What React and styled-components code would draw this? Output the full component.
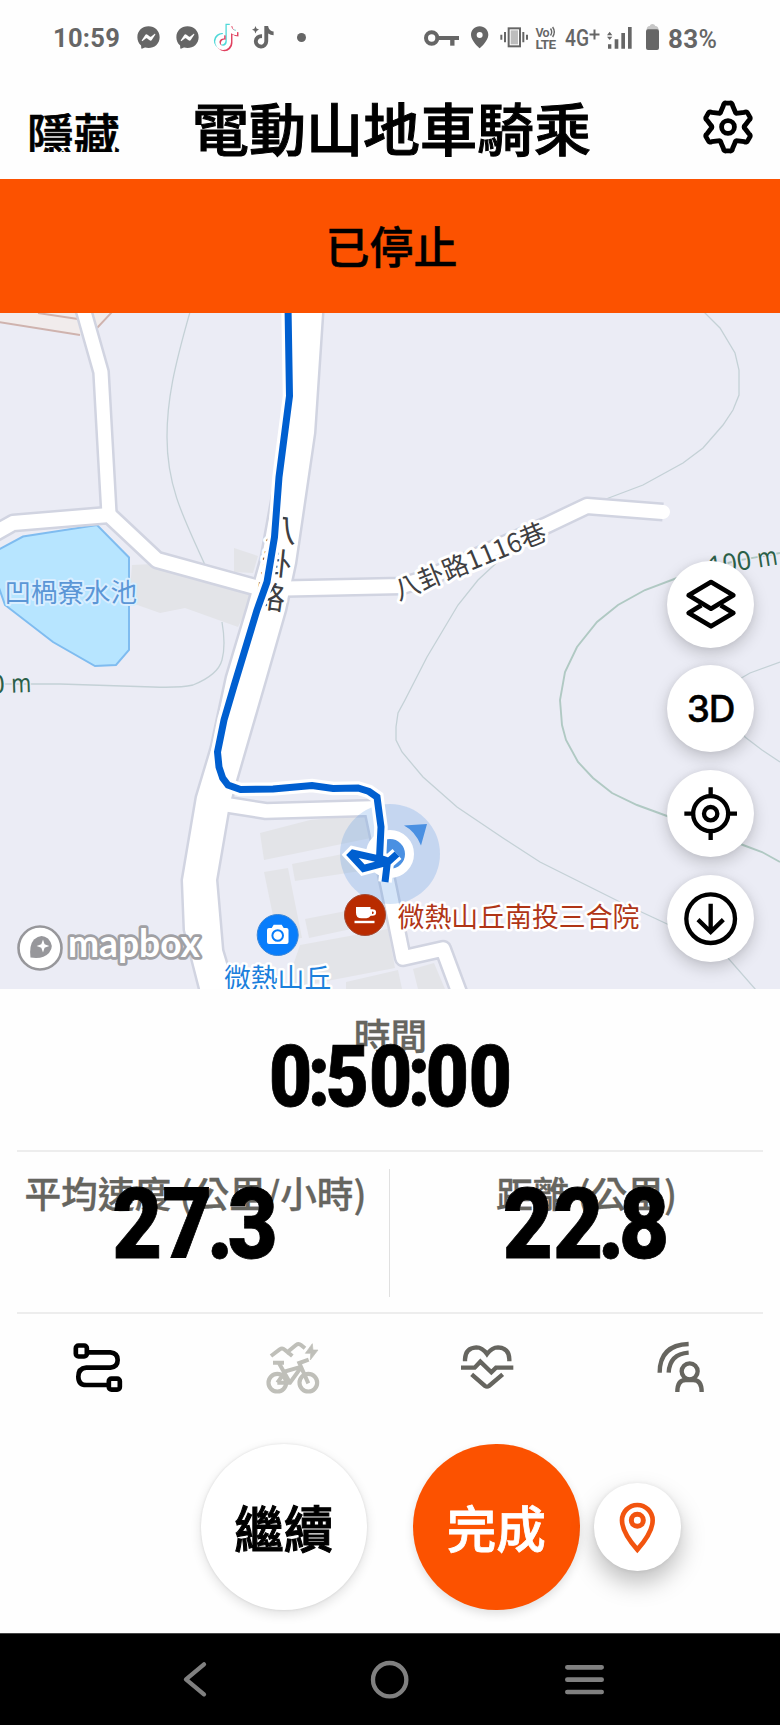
import React from "react";
import styled, { createGlobalStyle } from "styled-components";
import { FaFacebookMessenger, FaTiktok } from "react-icons/fa";

const ORANGE = "#fc5200";
const CJK = '"Noto Sans CJK TC", "Noto Sans CJK SC", sans-serif';

const GlobalStyle = createGlobalStyle`
  * { box-sizing: border-box; }
  body { margin: 0; background: #fefefe; }
`;

const Screen = styled.div`
  width: 780px;
  height: 1725px;
  display: flex;
  flex-direction: column;
  overflow: hidden;
  background: #fefefe;
  color: #000;
  font-family: Roboto, ${CJK};
`;

const StatusBar = styled.div`
  height: 75px;
  padding: 0 62px 0 53px;
  display: flex;
  align-items: center;
  justify-content: space-between;
  color: #666;
  line-height: 1;
`;

const StatusGroup = styled.div`
  display: flex;
  align-items: center;
  height: 30px;
`;

const StatusText = styled.span`
  font-family: Roboto, sans-serif;
  font-size: ${(p) => p.$size || 25.5}px;
  font-weight: ${(p) => p.$weight || 700};
  letter-spacing: ${(p) => p.$spacing || 0}px;
  margin-left: ${(p) => p.$gap || 0}px;
  padding-top: 2px;
  width: ${(p) => p.$width}px;
  white-space: nowrap;
`;

const StatusIcon = styled.span`
  display: flex;
  margin-left: ${(p) => p.$gap || 0}px;
  svg { display: block; overflow: visible; }
`;

const Dot = styled.span`
  width: 9px;
  height: 9px;
  border-radius: 50%;
  background: #666;
  margin-left: 23px;
`;

const Header = styled.header`
  height: 104px;
  padding: 0 26px 0 27px;
  display: grid;
  grid-template-columns: 120px 1fr 52px;
  align-items: center;
`;

const HideButton = styled.button`
  border: 0;
  padding: 0;
  background: none;
  color: #000;
  text-align: left;
  height: 49px;
  margin-top: 1px;
  overflow: hidden;
  font: 500 46.5px/60px ${CJK};
  -webkit-text-stroke: 0.7px currentColor;
  white-space: nowrap;
`;

const Title = styled.h1`
  margin: 0 0 2px -66px;
  text-align: center;
  font: 500 57px/80px ${CJK};
  -webkit-text-stroke: 1px currentColor;
  white-space: nowrap;
`;

const IconButton = styled.button`
  border: 0;
  padding: 0;
  background: none;
  display: flex;
  justify-content: center;
  color: #000;
  svg { display: block; overflow: visible; }
`;

const Banner = styled.div`
  height: 134px;
  background: ${ORANGE};
  display: flex;
  align-items: center;
  justify-content: center;
  padding: 0 0 0 3px;
  font: 500 44px/1.4 ${CJK};
  -webkit-text-stroke: 0.5px currentColor;
`;

const MapPanel = styled.section`
  position: relative;
  height: 676px;
  overflow: hidden;
  background: #ebecf5;
`;

const MapSvg = styled.svg`
  display: block;
`;

const MapControls = styled.div`
  position: absolute;
  right: 26px;
  top: 247.5px;
  display: flex;
  flex-direction: column;
  gap: 17.8px;
`;

const RoundButton = styled.button`
  width: ${(p) => p.$size}px;
  height: ${(p) => p.$size}px;
  flex: none;
  border: 0;
  padding: 0;
  border-radius: 50%;
  display: flex;
  align-items: center;
  justify-content: center;
  background: ${(p) => p.$bg || "#fff"};
  color: ${(p) => p.$fg || "#000"};
  box-shadow: ${(p) => p.$shadow || "0 6px 16px rgba(0,0,0,.18), 0 0 6px rgba(0,0,0,.06)"};
  font: ${(p) => p.$font || "500 49.5px/1.4 " + CJK};
  letter-spacing: ${(p) => p.$spacing || 0}px;
  margin: ${(p) => p.$margin || 0};
  -webkit-text-stroke: ${(p) => p.$stroke || 0}px currentColor;
  svg { display: block; overflow: visible; }
`;

const Stats = styled.section`
  margin: 0 17px;
  display: flex;
  flex-direction: column;
`;

const StatRow = styled.div`
  display: grid;
  grid-template-columns: ${(p) => (p.$split ? "372px 1fr" : "1fr")};
  height: ${(p) => p.$height}px;
  padding: ${(p) => (p.$split ? "17px 0 15px" : "0")};
  border-bottom: 2px solid #ededed;
`;

const Stat = styled.div`
  display: flex;
  flex-direction: column;
  align-items: center;
  border-left: ${(p) => (p.$divided ? "1px solid #e0e0e0" : "0")};
  padding: 0 ${(p) => p.$right || 0}px 0 ${(p) => p.$left || 0}px;
  min-width: 0;
`;

const StatLabel = styled.div`
  color: #66655f;
  font: 500 36.7px/54px ${CJK};
  -webkit-text-stroke: 0.3px currentColor;
  height: ${(p) => p.$height}px;
  margin-top: ${(p) => p.$top}px;
  white-space: nowrap;
`;

const StatValue = styled.div`
  z-index: 1;
  font: 900 ${(p) => p.$size}px/${(p) => p.$size}px Roboto, sans-serif;
  transform: scaleX(${(p) => p.$scale});
  -webkit-text-stroke: 0.8px currentColor;
  white-space: nowrap;
`;

const Separator = styled.span`
  margin: 0 ${(p) => p.$trim}px;
`;

const Tabs = styled.nav`
  height: 110px;
  padding-bottom: 2px;
  display: grid;
  grid-template-columns: repeat(4, 1fr);
  align-items: center;
`;

const Actions = styled.div`
  flex: 1;
  display: flex;
  align-items: flex-start;
  padding: 19.5px 0 0 200.5px;
`;

const NavBar = styled.footer`
  height: 92px;
  padding: 0 97.5px;
  display: grid;
  grid-template-columns: repeat(3, 1fr);
  align-items: center;
  background: #000;
  border-top: 1px solid #444;
`;

/* Draws a glyph from a viewBox whose units are a third of a pixel. */
const Glyph = ({ box, children, ...rest }) => {
  const [, , w, h] = box.split(" ").map(Number);
  return (
    <svg viewBox={box} width={w / 3} height={h / 3} fill="none" stroke="currentColor" {...rest}>
      {children}
    </svg>
  );
};

const gearPath = (() => {
  const pt = (r, deg) => {
    const a = ((deg - 90) * Math.PI) / 180;
    return `${(r * Math.cos(a)).toFixed(2)} ${(r * Math.sin(a)).toFixed(2)}`;
  };
  let d = "";
  for (let i = 0; i < 6; i++) {
    const t = i * 60;
    d += `${i ? "L" : "M"}${pt(22, t - 12)} Q${pt(24.8, t - 10)} ${pt(24, t - 4.5)} L${pt(24, t + 4.5)} Q${pt(24.8, t + 10)} ${pt(22, t + 12)} L${pt(17.2, t + 24)} Q${pt(15, t + 30)} ${pt(17.2, t + 36)}`;
  }
  return d + "Z";
})();

function Status() {
  return (
    <StatusBar>
      <StatusGroup>
        <StatusText $width={66} $spacing={0.3}>10:59</StatusText>
        <StatusIcon $gap={18}><FaFacebookMessenger size={23} /></StatusIcon>
        <StatusIcon $gap={16}><FaFacebookMessenger size={23} /></StatusIcon>
        <StatusIcon $gap={14}>
          <svg width="25" height="27" viewBox="0 0 25 27">
            <g color="#4fd8d8"><FaTiktok x="-0.7" y="-0.2" size={25} /></g>
            <g color="#e0405f"><FaTiktok x="2" y="2.2" size={25} /></g>
            <g color="#fefefe"><FaTiktok x="0.6" y="1" size={25} /></g>
          </svg>
        </StatusIcon>
        <StatusIcon $gap={14}>
          <svg width="22" height="23" viewBox="0 0 22 23">
            <FaTiktok x="0.5" y="0" size={22.5} />
            <path d="M3.5 0l1 2.5L7 3.6 4.6 5 3.4 7.4 2.4 4.8 0 3.8l2.5-1.3z" fill="#666" />
          </svg>
        </StatusIcon>
        <Dot />
      </StatusGroup>
      <StatusGroup>
        <StatusIcon>
          <Glyph box="102 85 105 54">
            <circle cx="125" cy="112" r="17" strokeWidth="12" />
            <path d="M142 112H207" strokeWidth="12" />
            <path d="M187 112V135" strokeWidth="13" />
          </Glyph>
        </StatusIcon>
        <StatusIcon $gap={12}>
          <Glyph box="245 79 53 68">
            <path fill="currentColor" stroke="none" fillRule="evenodd" d="M271 80c-15 0-26 11-26 26 0 18 26 40 26 40s26-22 26-40c0-15-11-26-26-26zm0 17a9 9 0 1 1 0 18 9 9 0 0 1 0-18z" />
          </Glyph>
        </StatusIcon>
        <StatusIcon $gap={11}>
          <Glyph box="332 82 86 62">
            <rect x="358" y="86" width="34" height="54" strokeWidth="6" />
            <rect x="364" y="92" width="22" height="42" fill="#bdbdbd" stroke="none" />
            <path d="M347 97V128M336 105V120M402 97V128M413 105V120" strokeWidth="6" />
          </Glyph>
        </StatusIcon>
        <StatusIcon $gap={7}>
          <svg width="22" height="24" viewBox="0 0 22 24" fill="#666">
            <text x="0.5" y="10.5" fontFamily="Roboto, sans-serif" fontWeight="600" fontSize="12.5" textLength="14">Vo</text>
            <path d="M15.5 2.5q2.4 3.5 0 7M17.6 1q3.4 4.8 0 10" fill="none" stroke="#666" strokeWidth="1.4" />
            <text x="0.5" y="23" fontFamily="Roboto, sans-serif" fontWeight="700" fontSize="13.5" textLength="20.5">LTE</text>
          </svg>
        </StatusIcon>
        <StatusIcon $gap={8}>
          <svg width="35" height="24" viewBox="0 0 35 24" fill="#666">
            <text x="0" y="20" fontFamily="Roboto, sans-serif" fontWeight="500" fontSize="24" textLength="24" lengthAdjust="spacingAndGlyphs">4G</text>
            <path d="M24.5 8.5H34.5M29.5 3.5V13.5" stroke="#666" strokeWidth="2" />
          </svg>
        </StatusIcon>
        <StatusIcon $gap={7}>
          <Glyph box="655 78 76 66">
            <path fill="currentColor" stroke="none" d="M658 130h10v13h-10zM678 115h11v28h-11zM698 96h11v47h-11zM718 78h11v65h-11zM655 103l8-11 8 11zM655 107h16l-8 10z" />
          </Glyph>
        </StatusIcon>
        <StatusIcon $gap={13}>
          <Glyph box="771 72 40 79">
            <path fill="#c6c6c6" stroke="none" d="M773 90q0-12 9-12 2-6 8-6 7 0 9 6 9 0 10 12z" />
            <rect x="771" y="88" width="39" height="62" rx="6" fill="currentColor" stroke="none" />
          </Glyph>
        </StatusIcon>
        <StatusText $gap={9} $width={50} $size={26} $spacing={0.3}>83<StatusText $weight={500} $size={25}>%</StatusText></StatusText>
      </StatusGroup>
    </StatusBar>
  );
}

const roads = [
  { d: "M79 300L84 312L101 372L109 514", w: 13 },
  { d: "M-12 537L13 523L109 515L157 560L262 589", w: 14 },
  { d: "M262 589L402 586L430 577L545 526L587 506L663 512", w: 14 },
  { d: "M222 804L266 811L372 808L389 889L403 958L443 949L462 1000", w: 13.5 },
];

const mainRoad =
  "M289 300L288 396L276 480L262 557L248 607L227 677L212 747L197 797L183 880L185 930L203 1000H237L222 950L216 880L228 810L236 780L265 680L285 610L295 563L314 433L322 313V300Z";

const contours = [
  "M190 312C174 368 167 400 167 437C167 485 182 515 206 567",
  "M222 622Q226 645 222 660T193 685Q180 688 153 687L60 684L-4 684",
  "M704 312L720 328L735 353L739 370V395L733 410L723 425L703 448L683 463L643 485L606 499",
  "M505 555L478 580L458 605L427 657L405 700L398 713L396 727V740L402 752L423 777L457 807L503 838L540 862L620 902L680 930L728 958L756 990",
  "M780 662L750 673L738 680L730 700L745 737L762 750L780 762",
];

const route =
  "M288 306L289.5 396L279 477L274.5 537L267 582L257 610L234 686L224 720L217.5 752L219 767L222.7 778L228 785L240.5 789.5L273 789L312 785.5L333 788.5L358 788L369 791.5L377 797L381 827L379.5 858L388 861L353 853L351 855L363.5 868.5L388 862L397 854M387.5 861L385 882";

const haloStyle = { paintOrder: "stroke", strokeLinejoin: "round" };

const ContourLabel = ({ transform }) => (
  <g transform={transform} fill="#2b6048" stroke="#ebecf5" strokeWidth="3" fontSize="26" fontFamily='"Noto Sans", sans-serif' style={haloStyle}>
    <text x="-69" textLength="43" lengthAdjust="spacingAndGlyphs">100</text>
    <text x="-19.500" textLength="20" lengthAdjust="spacingAndGlyphs">m</text>
  </g>
);

function MapView() {
  return (
    <MapSvg width="780" height="676" viewBox="0 313 780 676" fontFamily={CJK} fill="none">
      <path d="M-4 308H112L97 328L80 335L-4 322Z" fill="#f1ecec" />
      <path d="M-2 322L80 335M38 313L78 319M112 312L97 328" stroke="#cfb3ae" strokeWidth="1.9" />
      <g fill="#e3e4e8">
        <path d="M132 565L153 564L160 570L254 594L238 627L185 608L160 613L129 602Z" />
        <path d="M234 548L258 556L253 573L234 572Z" />
        <path d="M260 833L310 820L366 815L371 838L264 860Z" />
        <path d="M292 864L353 852L378 852L380 868L295 881Z" />
        <path d="M264 872L288 868L302 938L278 940Z" />
        <path d="M305 919L346 911L380 906L384 922L309 938Z" />
        <path d="M300 945L388 929L395 968L285 989Z" />
        <path d="M346 982L398 970L402 989H346Z" />
        <path d="M413 969L434 963L445 989H418Z" />
      </g>
      <path d="M-2 550L23 536.5L97 525L129 557.5V650L116 665L95 666L53 642L5 605L-2 585Z" fill="#b7e5ff" stroke="#7fbcf0" strokeWidth="2" />
      {contours.map((d) => <path key={d} d={d} stroke="#c4d1d6" strokeWidth="1.3" />)}
      <path d="M780 553L735 561L677 578L645 590L618 605L597 622L577 647L565 672L560 700L562 725L566 740L578 762L593 778L612 793L637 805L667 816L743 845L762 852L780 862" stroke="#b0c9c3" strokeWidth="1.9" />
      <g stroke="#d1d4e1" strokeLinejoin="round">
        {roads.map((r) => <path key={r.d} d={r.d} strokeWidth={r.w + 5} />)}
        <path d={mainRoad} strokeWidth="5" />
      </g>
      <g stroke="#fff" strokeLinejoin="round" strokeLinecap="round">
        {roads.map((r) => <path key={r.d} d={r.d} strokeWidth={r.w} />)}
        <path d={mainRoad} fill="#fff" stroke="none" />
      </g>

      <circle cx="390" cy="854" r="50" fill="#4a90e2" fillOpacity=".23" />
      <path d="M404 825.5L427 824L421 845.5Q415 831 404 825.5Z" fill="#4a90e2" />
      <circle cx="390" cy="854" r="19.5" fill="#4a90e2" stroke="#fff" strokeWidth="9" />

      <g fill="#3f3f42" stroke="#fff" strokeWidth="6" fontSize="31" style={haloStyle}>
        <text transform="translate(265 539) rotate(7)">八</text>
        <text transform="translate(260 573) rotate(6)">卦</text>
        <text transform="translate(253 606) rotate(8)">路</text>
        <text transform="translate(398.5 600.5) rotate(-22.3)" textLength="162" fontSize="26">八卦路1116巷</text>
      </g>

      <path d={route} stroke="#fff" strokeWidth="13.5" />
      <path d={route} stroke="#005fd0" strokeWidth="7" />

      <text x="4.5" y="602" fontSize="26.5" fill="#5b96d6" stroke="#d9eeff" strokeWidth="4" style={haloStyle}>凹楇寮水池</text>
      <ContourLabel transform="translate(31 692) rotate(-2)" />
      <ContourLabel transform="translate(778 564.5) rotate(-9)" />

      <circle cx="365" cy="915" r="20.5" fill="#b92b00" stroke="#a34a33" strokeWidth="1" />
      <path d="M356 907h14.500v2.200h1.800q3.800 0 3.800 3.300t-3.800 3.300h-1.600q-1.500 2.400-4.200 2.400h-5q-5.500 0-5.500-5.500zM372 911.500v2.600q1.800 0 1.800-1.300t-1.800-1.300z" fill="#fff" fillRule="evenodd" />
      <path d="M354.500 922H374.500" stroke="#fff" strokeWidth="2.4" />
      <text x="397.500" y="927" fontSize="26.9" fill="#b03516" stroke="#fff" strokeWidth="5" style={haloStyle}>微熱山丘南投三合院</text>

      <circle cx="277.700" cy="935" r="20.5" fill="#087dfb" stroke="#3a86d8" strokeWidth="1" />
      <path d="M269 928h2.700l2-3.200h8l2 3.200h2.800q2 0 2 2v12q0 2-2 2h-17.500q-2 0-2-2v-12q0-2 2-2z" fill="#fff" />
      <circle cx="277.700" cy="935.500" r="5.3" stroke="#087dfb" strokeWidth="2" />
      <text x="224" y="987.5" fontSize="26.8" fill="#1b80dc" stroke="#fff" strokeWidth="5" style={haloStyle}>微熱山丘</text>

      <circle cx="40" cy="948" r="21.5" fill="#fff" stroke="#97979b" strokeWidth="2.6" />
      <path d="M30.500 957.500Q29 945 34 939.500Q41 933 48 938.500Q55 946 49 953Q43 959.500 30.500 957.500Z" fill="#97979b" />
      <path d="M43 939.500L44.600 944.200L49.300 946L44.600 947.800L43 952.500L41.300 947.800L36.600 946L41.300 944.200Z" fill="#fff" />
      <text x="68" y="957" fontFamily="Lato, sans-serif" fontWeight="700" fontSize="39" textLength="132" lengthAdjust="spacingAndGlyphs" fill="#fff" stroke="#a0a0a4" strokeWidth="5.5" style={haloStyle}>mapbox</text>
    </MapSvg>
  );
}

export default function App() {
  return (
    <Screen>
      <GlobalStyle />
      <Status />
      <Header>
        <HideButton>隱藏</HideButton>
        <Title>電動山地車騎乘</Title>
        <IconButton aria-label="設定">
          <svg width="52" height="52" viewBox="-26 -26 52 52" fill="none" stroke="currentColor" strokeWidth="4.800" strokeLinejoin="round">
            <path d={gearPath} />
            <circle r="6.400" />
          </svg>
        </IconButton>
      </Header>
      <Banner>已停止</Banner>
      <MapPanel>
        <MapView />
        <MapControls>
          <RoundButton $size={87}>
            <Glyph box="883 804 156 156" strokeWidth="14" strokeLinejoin="round">
              <path d="M961 816L1028 856L961 896L894 856Z" />
              <path d="M932 886L894 909L961 949L1028 909L990 886" />
            </Glyph>
          </RoundButton>
          <RoundButton $size={87} $font="500 37px/1 Inter, sans-serif" $spacing={-1.2} $stroke={0.4}>3D</RoundButton>
          <RoundButton $size={87}>
            <Glyph box="881 321 160 160" strokeWidth="13">
              <circle cx="961" cy="401" r="52.500" />
              <circle cx="961" cy="401" r="20" />
              <path d="M961 322V349M961 453V480M882 401H909M1013 401H1040" />
            </Glyph>
          </RoundButton>
          <RoundButton $size={87}>
            <Glyph box="881 635 160 160" strokeWidth="13">
              <circle cx="961" cy="715" r="73" />
              <path d="M961 670V754M923 718L961 755L999 718" />
            </Glyph>
          </RoundButton>
        </MapControls>
      </MapPanel>
      <Stats>
        <StatRow $height={163}>
          <Stat $left={1}>
            <StatLabel $top={18} $height={27}>時間</StatLabel>
            <StatValue $size={86} $scale={0.865}>
              0<Separator $trim={-5}>:</Separator>50<Separator $trim={-5}>:</Separator>00
            </StatValue>
          </Stat>
        </StatRow>
        <StatRow $height={162} $split>
          <Stat $right={15}>
            <StatLabel $top={-4} $height={11}>平均速度 (公里/小時)</StatLabel>
            <StatValue $size={98} $scale={0.88}>
              27<Separator $trim={-6}>.</Separator>3
            </StatValue>
          </Stat>
          <Stat $left={20} $divided>
            <StatLabel $top={-4} $height={11}>距離 (公里)</StatLabel>
            <StatValue $size={98} $scale={0.885}>
              22<Separator $trim={-6}>.</Separator>8
            </StatValue>
          </Stat>
        </StatRow>
      </Stats>
      <Tabs>
        <IconButton aria-label="路線">
          <Glyph box="96 61 156 160" strokeWidth="14">
            <rect x="107.500" y="74.500" width="33" height="33" rx="8" />
            <rect x="206.500" y="174" width="33" height="33" rx="8" />
            <path d="M141 95H211Q233 97 233 118T211 141H139Q115 143 115 168T139 193H207" />
          </Glyph>
        </IconButton>
        <IconButton aria-label="運動類型">
          <Glyph box="678 62 158 160" color="#bfbfb9" strokeWidth="12.500">
            <circle cx="712" cy="187" r="26.500" />
            <circle cx="805" cy="187" r="26.500" />
            <path d="M699 127H732M718 130L749 186M712 187L737 153L785 139M712 187H750L785 139M805 189L778 128L806 118" strokeWidth="12" />
            <path d="M693 107L719 87Q727 82 734 88L757 107M738 99L768 74Q776 68 783 74L795 84" strokeWidth="12" />
            <path d="M817 70L796 99H812L811 119L834 89H819Z" fill="currentColor" stroke="currentColor" strokeWidth="2" />
          </Glyph>
        </IconButton>
        <IconButton aria-label="心率">
          <Glyph box="93 58 158 160" color="#66655f" strokeWidth="13">
            <path d="M105 119V113Q106 79 139 77Q157 77 171 97Q186 77 204 77Q238 79 238 113V119" />
            <path d="M93 138H134L151 120L184 152L198 138H250" />
            <path d="M125 158L165 193Q171 197 177 193L218 158" />
          </Glyph>
        </IconButton>
        <IconButton aria-label="即時分享">
          <Glyph box="685 60 148 160" color="#66655f" strokeWidth="13">
            <path d="M690 155Q690 72 777 69M717 155Q720 99 777 95" />
            <circle cx="780" cy="151" r="24" />
            <path d="M743 213Q743 177 768 177H791Q816 177 816 213" />
          </Glyph>
        </IconButton>
      </Tabs>
      <Actions>
        <RoundButton $size={166.5} $stroke={1.1} $shadow="0 4px 12px rgba(0,0,0,.12), 0 0 3px rgba(0,0,0,.1)">繼續</RoundButton>
        <RoundButton $size={166.5} $stroke={0.8} $bg={ORANGE} $fg="#fff" $margin="0 0 0 46px" $shadow="0 4px 10px rgba(0,0,0,.12)">完成</RoundButton>
        <RoundButton $size={87.5} $margin="39.5px 0 0 14px" $fg="#f2540f" $shadow="0 12px 24px rgba(0,0,0,.26), 0 0 4px rgba(0,0,0,.08)" aria-label="標記位置">
          <Glyph box="1318 240 110 156" strokeWidth="14">
            <path d="M1373 386Q1327 334 1327 298A46 46 0 0 1 1419 298Q1419 334 1373 386Z" />
            <circle cx="1373" cy="298" r="18" strokeWidth="15" />
          </Glyph>
        </RoundButton>
      </Actions>
      <NavBar>
        <IconButton aria-label="返回">
          <Glyph box="12 722 68 110" color="#808080" strokeWidth="13" strokeLinecap="round" strokeLinejoin="round">
            <path d="M72 732L18 777L72 822" />
          </Glyph>
        </IconButton>
        <IconButton aria-label="主畫面">
          <Glyph box="575 722 112 112" color="#808080" strokeWidth="13">
            <circle cx="631" cy="778" r="50" />
          </Glyph>
        </IconButton>
        <IconButton aria-label="選單">
          <Glyph box="1157 724 118 112" color="#808080" strokeWidth="14" strokeLinecap="round">
            <path d="M1164 743H1267M1164 780H1267M1164 817H1267" />
          </Glyph>
        </IconButton>
      </NavBar>
    </Screen>
  );
}
